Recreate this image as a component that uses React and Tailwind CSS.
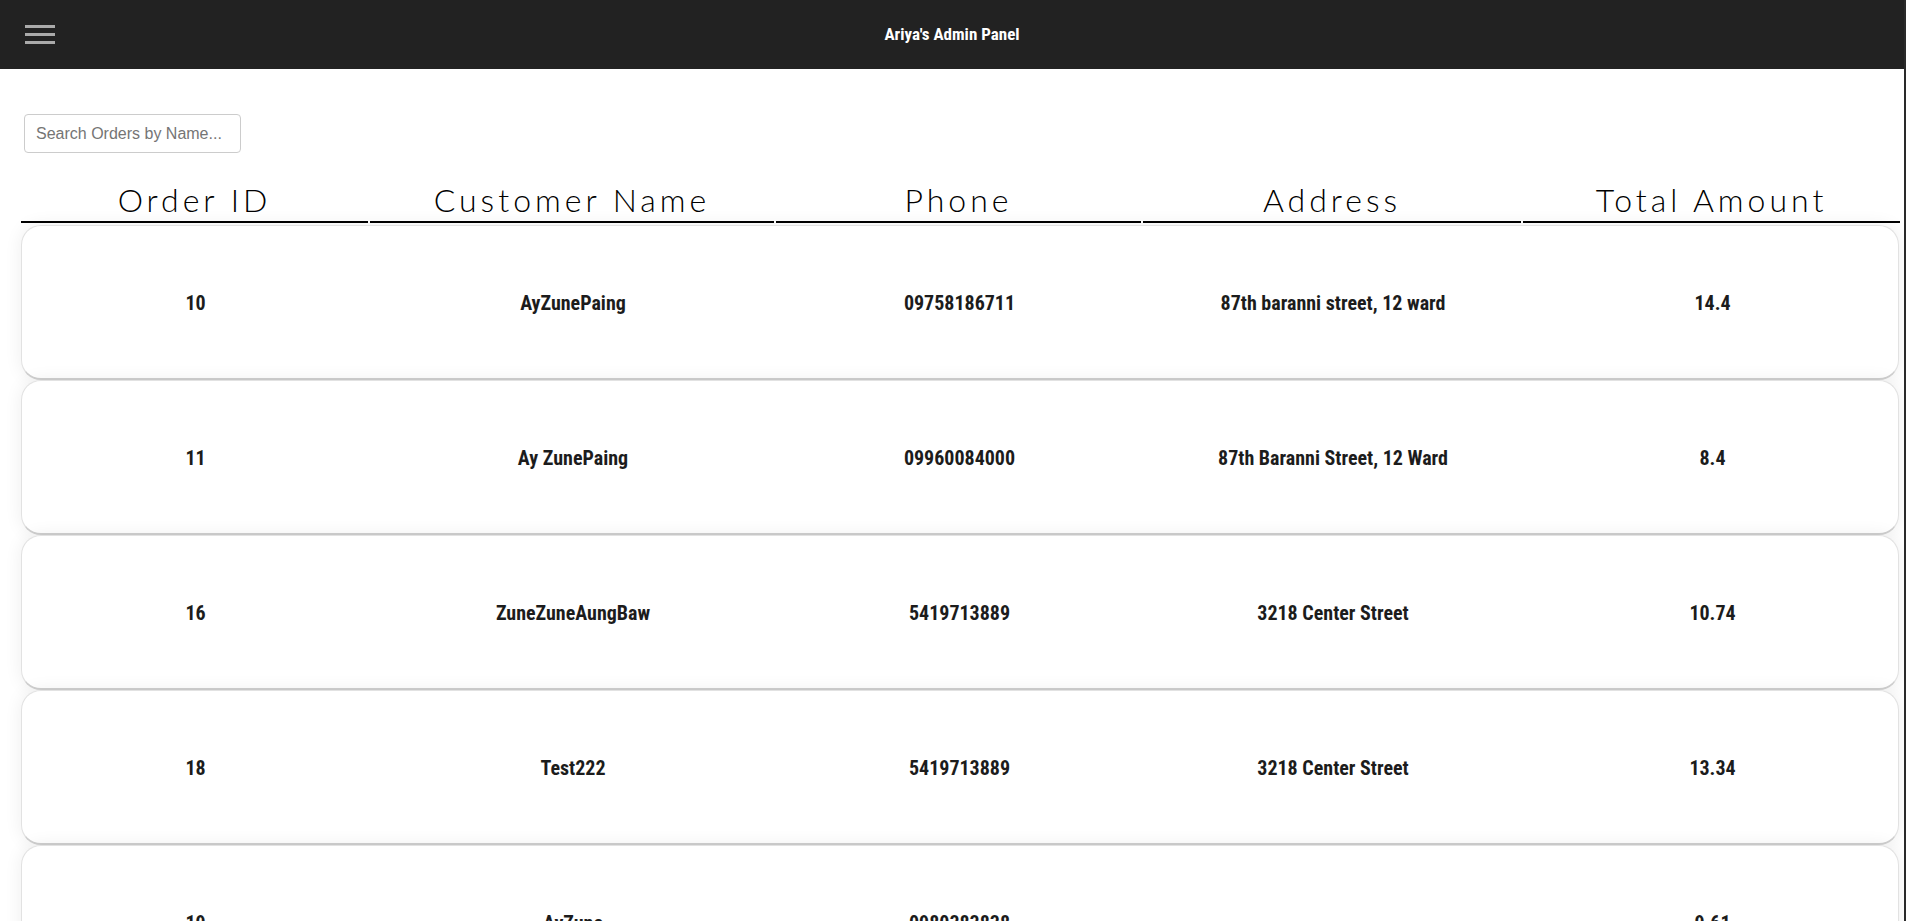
import { useState } from "react";

const orders = [
  { id: 10, name: "AyZunePaing", phone: "09758186711", address: "87th baranni street, 12 ward", total: "14.4" },
  { id: 11, name: "Ay ZunePaing", phone: "09960084000", address: "87th Baranni Street, 12 Ward", total: "8.4" },
  { id: 16, name: "ZuneZuneAungBaw", phone: "5419713889", address: "3218 Center Street", total: "10.74" },
  { id: 18, name: "Test222", phone: "5419713889", address: "3218 Center Street", total: "13.34" },
  { id: 19, name: "AyZune", phone: "0980383838", address: "", total: "9.61" },
];

const cols = "grid grid-cols-[347px_404px_365px_378px_377px] gap-x-[2px]";
const cellFont = "font-['Liberation_Sans_Narrow','Roboto_Condensed',Roboto,sans-serif]";

export default function App() {
  const [search, setSearch] = useState("");
  const filtered = orders.filter((o) => o.name.toLowerCase().includes(search.toLowerCase()));

  return (
    <div className="min-h-screen bg-white border-r-2 border-[#2a2a2a] overflow-hidden">
      {/* TOP BAR */}
      <header className="h-[69px] bg-[#222222] flex items-center relative">
        <button className="absolute left-[25px] top-[25px] flex flex-col gap-[5px]">
          <span className="block w-[30px] h-[3px] bg-[#aaaaaa]" />
          <span className="block w-[30px] h-[3px] bg-[#aaaaaa]" />
          <span className="block w-[30px] h-[3px] bg-[#aaaaaa]" />
        </button>
        <h1 className={`w-full text-center text-white text-[17px] font-bold ${cellFont}`}>Ariya's Admin Panel</h1>
      </header>

      <main className="pl-[21px] pr-[5px]">
        {/* SEARCH */}
        <div className="pt-[45px] pl-[3px]">
          <input
            type="text" value={search}
            onChange={(e) => setSearch(e.target.value)}
            placeholder="Search Orders by Name..."
            className="w-[217px] h-[39px] px-[11px] rounded-[4px] border border-[#cccccc] text-[16px] font-['Liberation_Sans',Arial,sans-serif] placeholder:text-[#757575] outline-none"
          />
        </div>

        {/* TABLE HEAD */}
        <div className={`${cols} mt-[27px]`}>
          {["Order ID", "Customer Name", "Phone", "Address", "Total Amount"].map((h) => (
            <div key={h} className="text-center text-[32px] leading-[40px] font-light tracking-[4px] text-black pb-[1px] border-b-2 border-black font-['Lato','Open_Sans',sans-serif]">
              {h}
            </div>
          ))}
        </div>

        {/* ROWS */}
        <div className="mt-[2px] flex flex-col w-[1878px]">
          {filtered.map((o) => (
            <div key={o.id} className="h-[155px] shrink-0 rounded-[20px] bg-white border border-[#e2e2e2] border-b-[#cfcfcf] border-b-2 shadow-[0_0_18px_rgba(0,0,0,0.07)]">
              <div className={`${cols} h-full pt-[1px] items-center text-center text-[20px] font-bold text-[#1c1c1c] ${cellFont}`}>
                <div>{o.id}</div>
                <div>{o.name}</div>
                <div>{o.phone}</div>
                <div>{o.address}</div>
                <div>{o.total}</div>
              </div>
            </div>
          ))}
        </div>
      </main>
    </div>
  );
}
